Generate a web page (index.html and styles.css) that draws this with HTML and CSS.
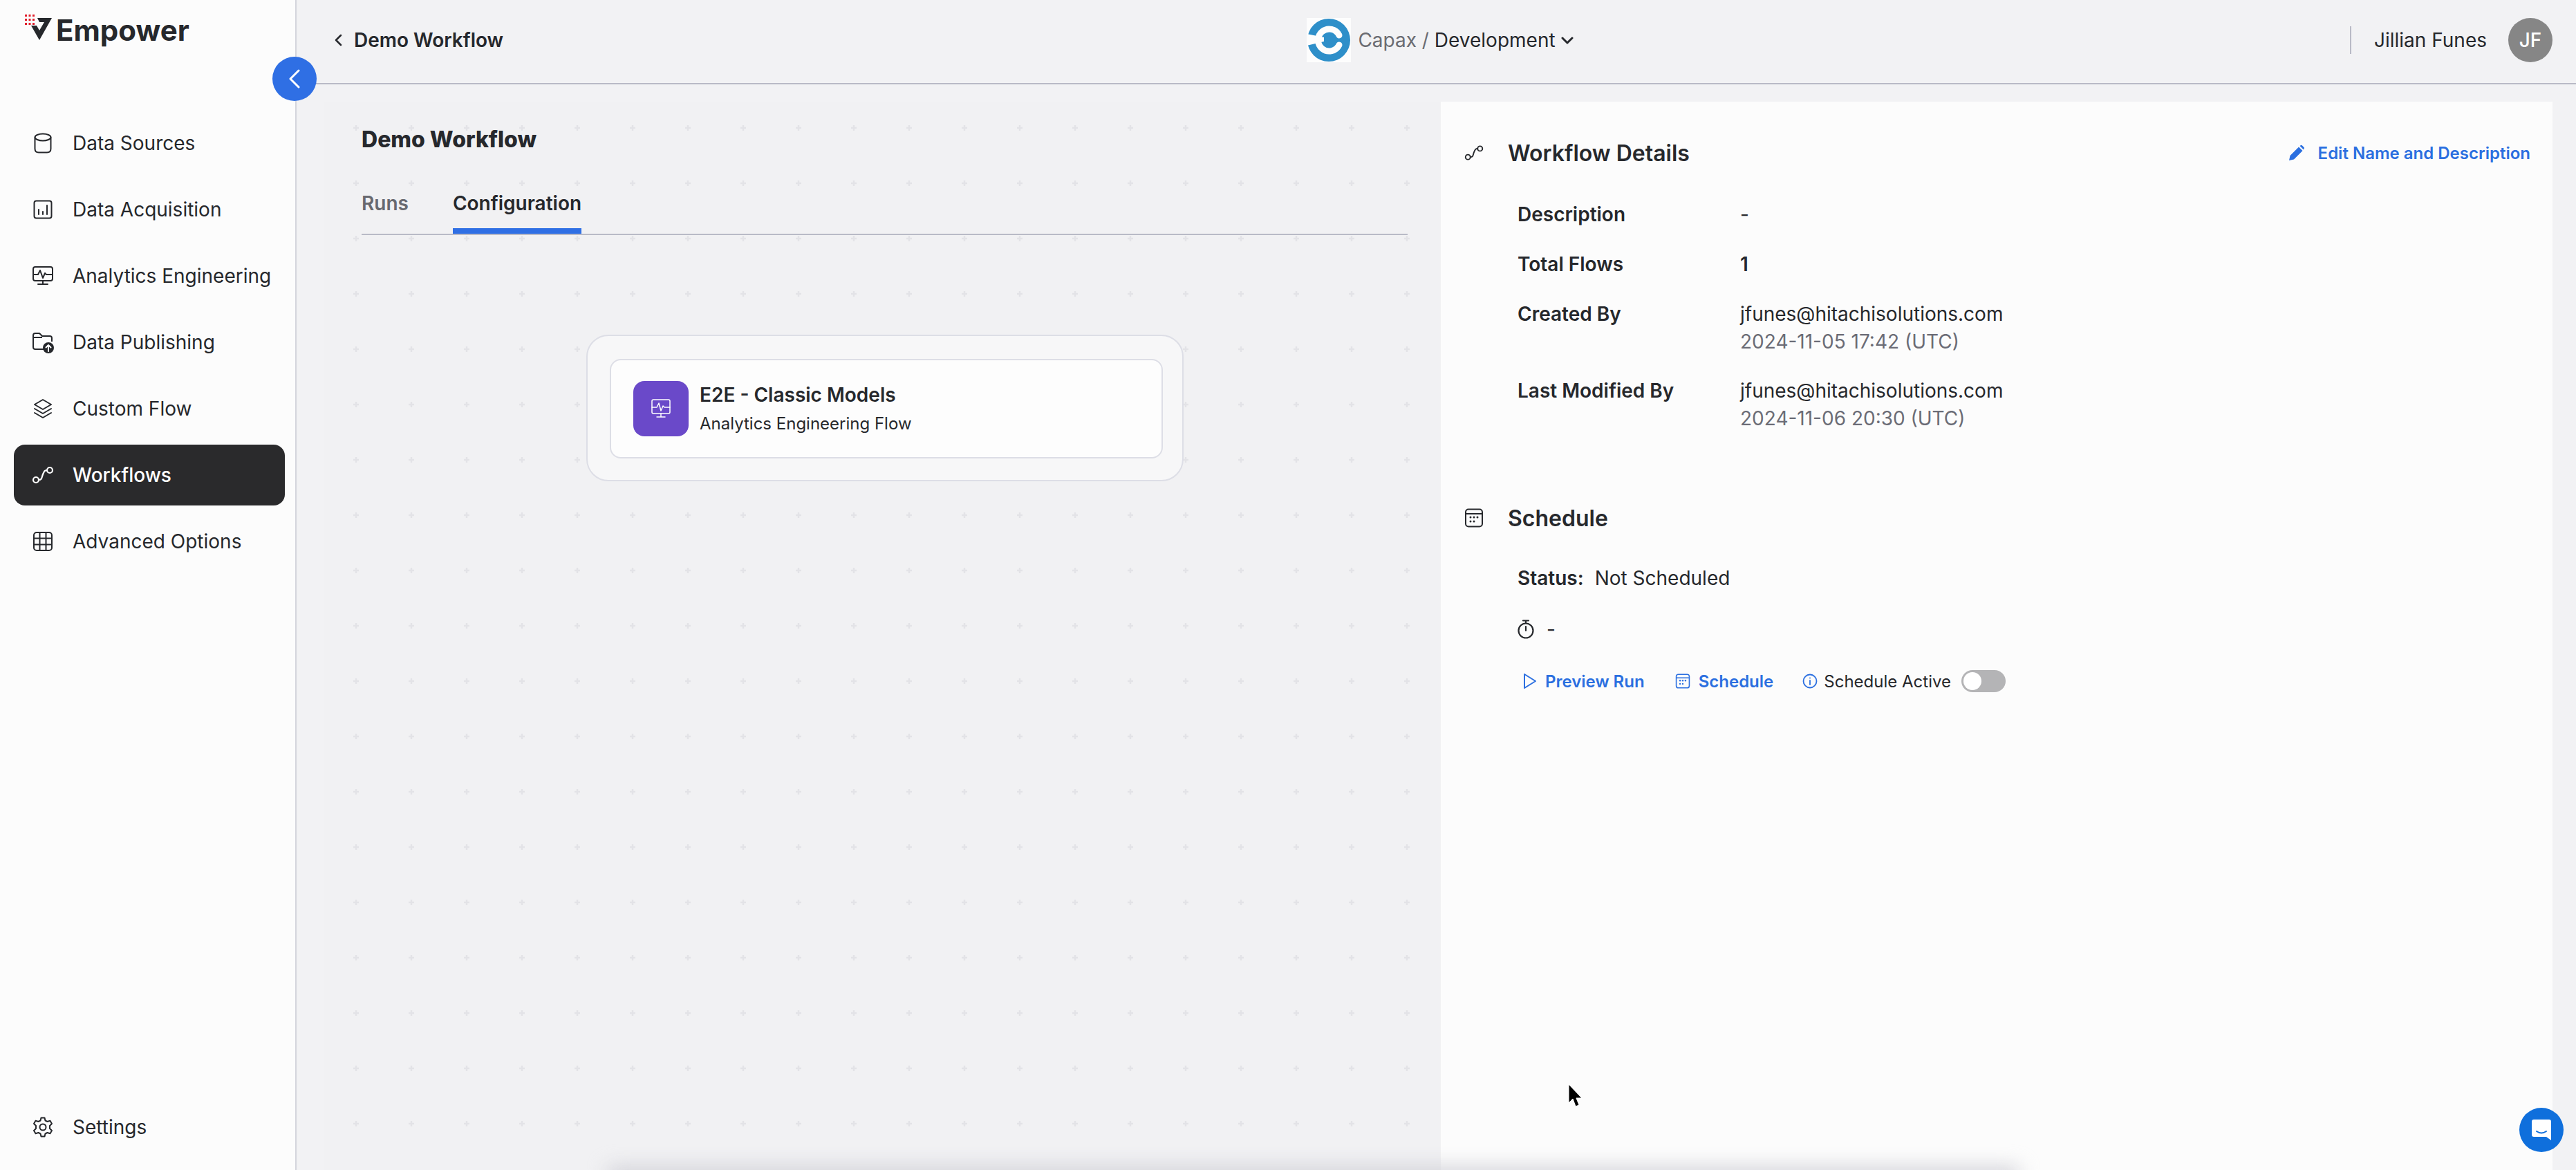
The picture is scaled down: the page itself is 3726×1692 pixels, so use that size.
FILE: index.html
```html
<!DOCTYPE html>
<html>
<head>
  <link rel="stylesheet" href="styles.css">
</head>
<body>
  <div class="app">
    <!-- Sidebar -->
    <aside class="sidebar">
      <div class="logo">
        <svg class="logo-mark" width="42" height="40" viewBox="0 0 42 40">
          <g fill="#e0202c">
            <rect x="0" y="1" width="3" height="3"/><rect x="5.500" y="1" width="3" height="3"/><rect x="11" y="1" width="3" height="3"/>
            <rect x="0" y="7" width="3" height="3"/><rect x="5.500" y="7" width="3" height="3"/><rect x="11" y="7" width="3" height="3"/>
            <rect x="0" y="13" width="3" height="3"/><rect x="5.500" y="13" width="3" height="3"/><rect x="11" y="13" width="3" height="3"/>
          </g>
          <path d="M18 6H39L21 38L9 17H17L21 24L28 12H21Z" fill="#26282c"/>
        </svg>
        <span class="logo-title">Empower</span>
      </div>
      <button class="collapse-button">
        <svg width="18" height="28" viewBox="0 0 18 28" fill="none" stroke="#fff" stroke-width="3" stroke-linecap="round" stroke-linejoin="round"><path d="M15 2L3 14L15 26"/></svg>
      </button>
      <nav class="nav-list">
        <a class="nav-item">
          <svg class="nav-icon" viewBox="0 0 32 32" fill="none" stroke="currentColor" stroke-width="2"><ellipse cx="16" cy="7.500" rx="11.500" ry="5"/><path d="M4.500 7.500V24Q4.500 29.500 10 29.500H22Q27.500 29.500 27.500 24V7.500"/></svg>
          <span>Data Sources</span>
        </a>
        <a class="nav-item">
          <svg class="nav-icon" viewBox="0 0 32 32" fill="none" stroke="currentColor" stroke-width="2" stroke-linecap="round"><rect x="3.500" y="3.500" width="25" height="25" rx="3"/><path d="M10 16V23M16 19V23M22 10V23"/></svg>
          <span>Data Acquisition</span>
        </a>
        <a class="nav-item">
          <svg class="nav-icon" viewBox="0 0 32 32" fill="none" stroke="currentColor" stroke-width="2" stroke-linecap="round" stroke-linejoin="round"><rect x="2" y="3" width="28" height="20" rx="3"/><path d="M2 14H9L12 8L16 19L19 12L21 14H30M16 23V28M9 28H23"/></svg>
          <span>Analytics Engineering</span>
        </a>
        <a class="nav-item">
          <svg class="nav-icon" viewBox="0 0 32 32" fill="none" stroke="currentColor" stroke-width="2" stroke-linejoin="round"><path d="M18 26H5Q2 26 2 23V6Q2 3 5 3H11L15 7H26Q29 7 29 10V15M2 9H15"/><circle cx="24" cy="24" r="8" fill="currentColor" stroke="none"/><path d="M24 29V20M20.500 23.500L24 20L27.500 23.500" stroke="#fff" stroke-linecap="round"/></svg>
          <span>Data Publishing</span>
        </a>
        <a class="nav-item">
          <svg class="nav-icon" viewBox="0 0 32 32" fill="none" stroke="currentColor" stroke-width="2" stroke-linejoin="round" stroke-linecap="round"><path d="M16 3L28 10L16 17L4 10Z"/><path d="M4 16L16 23L28 16M4 22L16 29L28 22"/></svg>
          <span>Custom Flow</span>
        </a>
        <a class="nav-item nav-item-active">
          <svg class="nav-icon" viewBox="0 0 32 32" fill="none" stroke="currentColor" stroke-width="2.200"><circle cx="6" cy="23" r="4"/><circle cx="26" cy="9" r="4"/><path d="M10 23C15 23 14 20 16 15C18 10 19 9 22 9"/></svg>
          <span>Workflows</span>
        </a>
        <a class="nav-item">
          <svg class="nav-icon" viewBox="0 0 32 32" fill="none" stroke="currentColor" stroke-width="2"><rect x="3" y="3" width="26" height="26" rx="4"/><path d="M3 11.500H29M3 20.500H29M11.500 3V29M20.500 3V29"/></svg>
          <span>Advanced Options</span>
        </a>
      </nav>
      <a class="nav-item settings-item">
        <svg class="nav-icon" viewBox="0 0 32 32" fill="none" stroke="currentColor" stroke-width="2" stroke-linejoin="round"><circle cx="16" cy="16" r="4.500"/><path d="M13.500 2.500H18.500L19.500 6.500L22.500 8L26.500 6.800L29 11L26 14V18L29 21L26.500 25.200L22.500 24L19.500 25.500L18.500 29.500H13.500L12.500 25.500L9.500 24L5.500 25.200L3 21L6 18V14L3 11L5.500 6.800L9.500 8L12.500 6.500Z"/></svg>
        <span>Settings</span>
      </a>
    </aside>

    <div class="main">
      <!-- Top bar -->
      <header class="topbar">
        <div class="crumb">
          <svg width="12" height="18" viewBox="0 0 12 18" fill="none" stroke="#26282c" stroke-width="2.500" stroke-linecap="round" stroke-linejoin="round"><path d="M10 2L3 9L10 16"/></svg>
          <span>Demo Workflow</span>
        </div>
        <div class="org">
          <svg class="org-logo" width="64" height="64" viewBox="0 0 64 64">
            <rect width="64" height="64" fill="#fdfdfd"/>
            <circle cx="32" cy="32" r="31" fill="#2e8fc9"/>
            <path d="M47 25A16 16 0 1 0 47 39" fill="none" stroke="#fdfdfd" stroke-width="9" stroke-linecap="round"/>
            <path d="M0 23L25 28V34L0 40Z" fill="#fdfdfd"/>
          </svg>
          <span class="org-name">Capax / </span>
          <span class="org-env">Development</span>
          <svg width="18" height="12" viewBox="0 0 18 12" fill="none" stroke="#26282c" stroke-width="3" stroke-linecap="round" stroke-linejoin="round"><path d="M2 3L9 10L16 3"/></svg>
        </div>
        <div class="user">
          <span class="user-name">Jillian Funes</span>
          <span class="avatar">JF</span>
        </div>
      </header>

      <div class="content">
        <!-- Workflow canvas -->
        <section class="canvas">
          <h1 class="page-title">Demo Workflow</h1>
          <div class="tabs">
            <span class="tab">Runs</span>
            <span class="tab tab-active">Configuration</span>
          </div>
          <div class="flow-group">
            <div class="flow-card">
              <span class="flow-icon">
                <svg width="32" height="32" viewBox="0 0 32 32" fill="none" stroke="#fff" stroke-width="1.500" stroke-linecap="round" stroke-linejoin="round"><rect x="3" y="3" width="26" height="20" rx="2"/><path d="M3 14H10L13 8L16 19L19 12L21 14H29M16 23V28M10 28H22"/></svg>
              </span>
              <div>
                <div class="flow-title">E2E - Classic Models</div>
                <div class="flow-sub">Analytics Engineering Flow</div>
              </div>
            </div>
          </div>
        </section>

        <!-- Details panel -->
        <section class="panel">
          <div class="panel-head">
            <svg class="head-icon" viewBox="0 0 32 32" fill="none" stroke="#26282c" stroke-width="2.200"><circle cx="6" cy="23" r="4"/><circle cx="26" cy="9" r="4"/><path d="M10 23C15 23 14 20 16 15C18 10 19 9 22 9"/></svg>
            <h2>Workflow Details</h2>
            <a class="edit-link">
              <svg width="22" height="22" viewBox="0 0 22 22" fill="#2b6fe0"><path d="M0 22L1.500 15L14 2.500L19.500 8L7 20.500ZM15.500 1L17 0Q18 -0.500 19 0.500L21.500 3Q22.500 4 21.500 5L21 6.500Z"/></svg>
              <span>Edit Name and Description</span>
            </a>
          </div>
          <div class="details">
            <div class="detail-row"><span class="detail-label">Description</span><span class="detail-value">-</span></div>
            <div class="detail-row"><span class="detail-label">Total Flows</span><span class="detail-value detail-strong">1</span></div>
            <div class="detail-row"><span class="detail-label">Created By</span><span class="detail-value">jfunes@hitachisolutions.com<small>2024-11-05 17:42 (UTC)</small></span></div>
            <div class="detail-row"><span class="detail-label">Last Modified By</span><span class="detail-value">jfunes@hitachisolutions.com<small>2024-11-06 20:30 (UTC)</small></span></div>
          </div>

          <div class="panel-head schedule-head">
            <svg class="head-icon" viewBox="0 0 28 28" fill="none" stroke="#26282c" stroke-width="2"><rect x="2" y="1.500" width="24" height="25" rx="4"/><path d="M2 8H26"/><g fill="#26282c" stroke="none"><circle cx="9" cy="13" r="1.500"/><circle cx="14" cy="13" r="1.500"/><circle cx="19" cy="13" r="1.500"/><circle cx="9" cy="19" r="1.500"/><circle cx="14" cy="19" r="1.500"/></g></svg>
            <h2>Schedule</h2>
          </div>
          <div class="schedule">
            <div class="status"><b>Status:</b><span>Not Scheduled</span></div>
            <div class="timer">
              <svg width="24" height="28" viewBox="0 0 24 28" fill="none" stroke="#26282c" stroke-width="2.200" stroke-linecap="round"><circle cx="12" cy="16" r="10.500"/><path d="M12 10V16M8 1.500H16M12 2V5"/></svg>
              <span>-</span>
            </div>
            <div class="actions">
              <a class="action action-run">
                <svg width="20" height="24" viewBox="0 0 20 24" fill="none" stroke="#2b6fe0" stroke-width="2" stroke-linejoin="round"><path d="M2 2L18 12L2 22Z"/></svg>
                <span>Preview Run</span>
              </a>
              <a class="action action-schedule">
                <svg width="22" height="22" viewBox="0 0 28 28" fill="none" stroke="#2b6fe0" stroke-width="2"><rect x="2" y="1.500" width="24" height="25" rx="4"/><path d="M2 8H26"/><g fill="#2b6fe0" stroke="none"><circle cx="9" cy="13" r="1.500"/><circle cx="14" cy="13" r="1.500"/><circle cx="19" cy="13" r="1.500"/><circle cx="9" cy="19" r="1.500"/><circle cx="14" cy="19" r="1.500"/></g></svg>
                <span>Schedule</span>
              </a>
              <div class="toggle-group">
                <svg width="22" height="22" viewBox="0 0 22 22" fill="none" stroke="#2b6fe0" stroke-width="1.800" stroke-linecap="round"><circle cx="11" cy="11" r="9.500"/><path d="M11 10V16M11 6.500V6.600"/></svg>
                <span>Schedule Active</span>
                <span class="toggle"><i></i></span>
              </div>
            </div>
          </div>
        </section>
      </div>
    </div>
  </div>

  <!-- Overlays -->
  <div class="bottom-shadow"></div>
  <svg class="cursor" width="22" height="36" viewBox="0 0 22 36"><path d="M2 1V28L8 22L12 33L17 31L13 21H21Z" fill="#000" stroke="#fff" stroke-width="1"/></svg>
  <button class="chat-button">
    <svg width="30" height="32" viewBox="0 0 30 32" fill="#fff"><path d="M4 1H26Q29 1 29 4V31L22 26H4Q1 26 1 23V4Q1 1 4 1Z"/><path d="M8 18Q15 23 22 18" fill="none" stroke="#0f6fdc" stroke-width="2" stroke-linecap="round"/></svg>
  </button>
</body>
</html>
```

FILE: styles.css
```css
* {
  margin: 0;
  padding: 0;
  box-sizing: border-box;
  font-family: 'Inter', sans-serif;
}

body {
  width: 3726px;
  height: 1692px;
  overflow: hidden;
  background: #f2f2f4;
  color: #26282c;
}

.app {
  display: flex;
  height: 1692px;
}

/* Sidebar */
.sidebar {
  position: relative;
  display: flex;
  flex-direction: column;
  width: 429px;
  flex-shrink: 0;
  padding: 0 15px 0 20px;
  background: #fcfcfc;
  border-right: 2px solid #d4d5dc;
}

.logo {
  display: flex;
  align-items: flex-start;
  gap: 3px;
  height: 163px;
  padding: 20px 0 0 16px;
}

.logo-mark {
  flex-shrink: 0;
}

.logo-title {
  font-size: 42px;
  line-height: 44px;
  font-weight: 700;
  margin-top: 2px;
}

.collapse-button {
  position: absolute;
  top: 82px;
  left: 394px;
  display: flex;
  align-items: center;
  justify-content: center;
  width: 64px;
  height: 64px;
  background: #2f6fe4;
  border: none;
  border-radius: 50%;
  z-index: 3;
}

.nav-list {
  display: flex;
  flex-direction: column;
  gap: 8px;
}

.nav-item {
  display: flex;
  align-items: center;
  gap: 27px;
  height: 88px;
  padding-left: 26px;
  font-size: 28px;
  border-radius: 16px;
  color: #26282c;
}

.nav-icon {
  width: 32px;
  height: 32px;
  flex-shrink: 0;
}

.nav-item-active {
  background: #2a2a2c;
  color: #ffffff;
  font-weight: 500;
}

.settings-item {
  margin-top: auto;
  margin-bottom: 18px;
}

/* Top bar */
.main {
  display: flex;
  flex-direction: column;
  flex: 1;
  min-width: 0;
}

.topbar {
  display: grid;
  grid-template-columns: 1fr auto 1fr;
  align-items: center;
  height: 122px;
  padding: 0 34px 4px 54px;
  border-bottom: 2px solid #b9bac6;
}

.crumb {
  display: flex;
  align-items: center;
  gap: 17px;
  font-size: 28px;
  font-weight: 600;
}

.org {
  display: flex;
  align-items: center;
  gap: 8px;
  font-size: 28px;
  margin-left: -9px;
}

.org-logo {
  margin-right: 2px;
}

.org-name {
  color: #6b6c72;
  white-space: pre;
}

.org-env {
  margin-left: -8px;
}

.user {
  display: flex;
  align-items: center;
  justify-content: flex-end;
  gap: 31px;
}

.user-name {
  display: flex;
  align-items: center;
  height: 40px;
  padding-left: 33px;
  font-size: 28px;
  border-left: 2px solid #b9bac6;
}

.avatar {
  display: flex;
  align-items: center;
  justify-content: center;
  width: 64px;
  height: 64px;
  background: #868686;
  border-radius: 50%;
  color: #ffffff;
  font-size: 28px;
  font-weight: 500;
}

/* Canvas */
.content {
  display: flex;
  flex: 1;
  min-height: 0;
  padding: 25px 34px 0 40px;
}

.canvas {
  width: 1615px;
  flex-shrink: 0;
  padding: 0 48px 0 54px;
  background-color: #f1f1f3;
  background-image: url("data:image/svg+xml,%3Csvg xmlns='http://www.w3.org/2000/svg' width='80' height='80'%3E%3Cpath d='M36 40H44M40 36V44' stroke='%23e3e3e7' stroke-width='2.500'/%3E%3C/svg%3E");
  background-size: 80px 80px;
  background-position: 6px -2px;
}

.page-title {
  font-size: 32px;
  line-height: 44px;
  font-weight: 800;
  margin-top: 33px;
}

.tabs {
  display: flex;
  gap: 64px;
  height: 63px;
  margin-top: 53px;
  border-bottom: 2px solid #b9bac6;
}

.tab {
  font-size: 28px;
  line-height: 34px;
  font-weight: 600;
  color: #68696f;
}

.tab-active {
  color: #26282c;
  border-bottom: 8px solid #2f6fe4;
  height: 61px;
}

.flow-group {
  width: 864px;
  height: 212px;
  margin: 144px 0 0 325px;
  padding: 33px 28px 0 32px;
  background: #f7f7f8;
  border: 2px solid #dddee6;
  border-radius: 32px;
}

.flow-card {
  display: flex;
  align-items: center;
  gap: 16px;
  height: 144px;
  padding-left: 32px;
  background: #fdfdfd;
  border: 2px solid #dddee6;
  border-radius: 16px;
}

.flow-icon {
  display: flex;
  align-items: center;
  justify-content: center;
  width: 80px;
  height: 80px;
  background: #6a49c9;
  border-radius: 16px;
}

.flow-title {
  font-size: 28px;
  line-height: 36px;
  font-weight: 600;
}

.flow-sub {
  font-size: 24px;
  line-height: 32px;
  margin-top: 8px;
}

/* Details panel */
.panel {
  flex: 1;
  min-width: 0;
  padding: 0 32px 0 34px;
  background: #fcfcfc;
}

.panel-head {
  display: flex;
  align-items: center;
  height: 40px;
  margin-top: 54px;
}

.panel-head h2 {
  font-size: 32px;
  font-weight: 600;
  margin-left: 35px;
}

.head-icon {
  width: 28px;
  height: 28px;
  flex-shrink: 0;
}

.edit-link {
  display: flex;
  align-items: center;
  gap: 20px;
  margin-left: auto;
  font-size: 24px;
  font-weight: 600;
  color: #2b6fe0;
}

.details {
  display: flex;
  flex-direction: column;
  gap: 36px;
  margin: 51px 0 0 77px;
}

.detail-row {
  display: flex;
  font-size: 28px;
  line-height: 36px;
}

.detail-label {
  width: 322px;
  font-weight: 600;
}

.detail-strong {
  font-weight: 600;
}

.detail-value small {
  display: block;
  margin: 3px 0 -2px;
  font-size: 28px;
  line-height: 38px;
  color: #6b6c76;
}

.schedule-head {
  margin-top: 107px;
}

.schedule {
  margin: 49px 0 0 77px;
  font-size: 28px;
}

.status {
  display: flex;
  gap: 16px;
  line-height: 36px;
}

.status b {
  font-weight: 600;
}

.timer {
  display: flex;
  align-items: center;
  gap: 18px;
  height: 30px;
  margin-top: 41px;
}

.actions {
  display: flex;
  align-items: center;
  gap: 44px;
  height: 34px;
  margin-top: 43px;
  padding-left: 8px;
  font-size: 24px;
}

.action {
  display: flex;
  align-items: center;
  gap: 12px;
  font-weight: 600;
  color: #2b6fe0;
}

.toggle-group {
  display: flex;
  align-items: center;
  gap: 9px;
  font-weight: 400;
  margin-left: -2px;
}

.toggle {
  position: relative;
  width: 64px;
  height: 32px;
  margin-left: 6px;
  background: #b4b4b6;
  border-radius: 16px;
}

.toggle i {
  position: absolute;
  top: 3px;
  left: 3px;
  width: 26px;
  height: 26px;
  background: #ffffff;
  border-radius: 50%;
}

/* Overlays */
.bottom-shadow {
  position: absolute;
  left: 880px;
  top: 1688px;
  width: 2040px;
  height: 24px;
  background: #cfcfd6;
  filter: blur(14px);
}

.cursor {
  position: absolute;
  left: 2267px;
  top: 1567px;
}

.chat-button {
  position: absolute;
  left: 3644px;
  top: 1602px;
  display: flex;
  align-items: center;
  justify-content: center;
  width: 64px;
  height: 64px;
  background: #0f6fdc;
  border: none;
  border-radius: 50%;
}
```
